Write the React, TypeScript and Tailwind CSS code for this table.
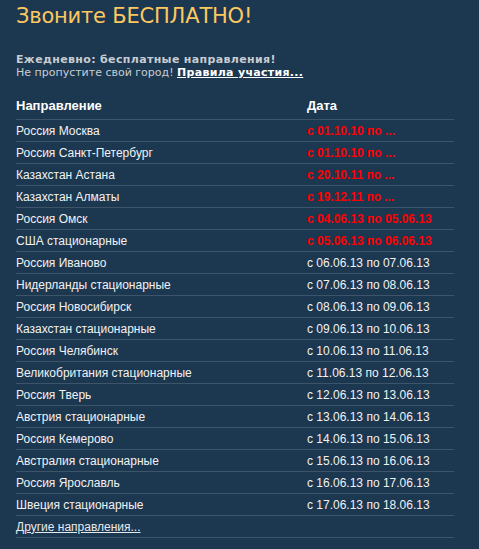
const rows: { name: string; date: string; hot?: boolean }[] = [
  { name: "Россия Москва", date: "с 01.10.10 по ...", hot: true },
  { name: "Россия Санкт-Петербург", date: "с 01.10.10 по ...", hot: true },
  { name: "Казахстан Астана", date: "с 20.10.11 по ...", hot: true },
  { name: "Казахстан Алматы", date: "с 19.12.11 по ...", hot: true },
  { name: "Россия Омск", date: "с 04.06.13 по 05.06.13", hot: true },
  { name: "США стационарные", date: "с 05.06.13 по 06.06.13", hot: true },
  { name: "Россия Иваново", date: "с 06.06.13 по 07.06.13" },
  { name: "Нидерланды стационарные", date: "с 07.06.13 по 08.06.13" },
  { name: "Россия Новосибирск", date: "с 08.06.13 по 09.06.13" },
  { name: "Казахстан стационарные", date: "с 09.06.13 по 10.06.13" },
  { name: "Россия Челябинск", date: "с 10.06.13 по 11.06.13" },
  { name: "Великобритания стационарные", date: "с 11.06.13 по 12.06.13" },
  { name: "Россия Тверь", date: "с 12.06.13 по 13.06.13" },
  { name: "Австрия стационарные", date: "с 13.06.13 по 14.06.13" },
  { name: "Россия Кемерово", date: "с 14.06.13 по 15.06.13" },
  { name: "Австралия стационарные", date: "с 15.06.13 по 16.06.13" },
  { name: "Россия Ярославль", date: "с 16.06.13 по 17.06.13" },
  { name: "Швеция стационарные", date: "с 17.06.13 по 18.06.13" },
];

export default function App() {
  return (
    <div className="min-h-[549px] w-[479px] bg-[#1c3750] px-4 pt-[2px] font-['Liberation_Sans',Arial,sans-serif]">
      <h1 className="font-['DejaVu_Sans',Verdana,sans-serif] text-[21px] leading-[28px] tracking-[-0.2px] text-[#fcc860]">
        Звоните БЕСПЛАТНО!
      </h1>

      <div className="mt-[23px] font-['DejaVu_Sans',Verdana,sans-serif] text-[11px] leading-[13px] text-[#c8ccd1]">
        <div className="font-bold tracking-[0.35px]">Ежедневно: бесплатные направления!</div>
        <div>
          Не пропустите свой город!{" "}
          <a href="#" className="font-bold tracking-[0.3px] text-white underline">
            Правила участия...
          </a>
        </div>
      </div>

      <div className="mt-[14px] w-[438px]">
        <div className="flex h-[27px] items-center border-b border-[#3e5569] pb-[1px] text-[13px] font-bold text-white">
          <div className="w-[291px]">Направление</div>
          <div>Дата</div>
        </div>
        {rows.map((r) => (
          <div
            key={r.name}
            className="flex h-[22px] items-center border-b border-[#3e5569] text-[12px] text-[#f2f2f2]"
          >
            <div className="w-[291px]">{r.name}</div>
            <div className={r.hot ? "font-bold text-[#ff0000]" : ""}>{r.date}</div>
          </div>
        ))}
        <div className="flex h-[22px] items-center border-b border-[#3e5569] text-[12px] text-[#e6e9ec]">
          <a href="#" className="underline">
            Другие направления...
          </a>
        </div>
      </div>
    </div>
  );
}
